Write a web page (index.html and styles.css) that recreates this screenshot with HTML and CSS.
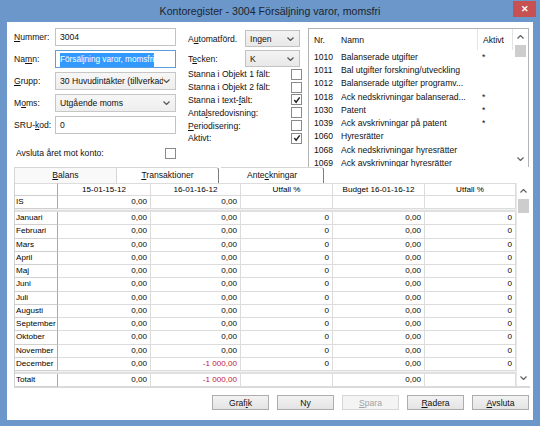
FILE: index.html
```html
<!DOCTYPE html>
<html lang="sv">
<head>
  <meta charset="UTF-8">
  <title>Kontoregister</title>
  <link rel="stylesheet" href="styles.css">
</head>
<body>
<div class="fonster">

  <!-- Titelrad -->
  <div class="titelrad">
    <span></span>
    <span class="titel">Kontoregister - 3004 Försäljning varor, momsfri</span>
    <span class="stang">✕</span>
  </div>

  <div class="innehall">
    <div class="topp">

      <!-- Vänster formulär -->
      <div class="vanster">
        <div class="falt-rad"><label><u>N</u>ummer:</label><div class="textruta">3004</div></div>
        <div class="falt-rad"><label>Na<u>m</u>n:</label><div class="textruta aktiv"><span class="markerad">Försäljning varor, momsfri</span></div></div>
        <div class="falt-rad"><label><u>G</u>rupp:</label>
          <div class="valruta"><span>30 Huvudintäkter (tillverkad</span>
            <svg class="pil" viewBox="0 0 7 4"><polyline points="0.5,0.5 3.5,3.5 6.5,0.5"/></svg></div>
        </div>
        <div class="falt-rad"><label>M<u>o</u>ms:</label>
          <div class="valruta"><span>Utgående moms</span>
            <svg class="pil" viewBox="0 0 7 4"><polyline points="0.5,0.5 3.5,3.5 6.5,0.5"/></svg></div>
        </div>
        <div class="falt-rad"><label>SRU-<u>k</u>od:</label><div class="textruta">0</div></div>
        <div class="avsluta-rad"><span>Avsluta året mot konto:</span><span class="kryss"></span></div>
      </div>

      <!-- Mitten -->
      <div class="mitten">
        <div class="val-rad"><label>A<u>u</u>tomatförd.</label>
          <div class="valruta liten"><span>Ingen</span>
            <svg class="pil" viewBox="0 0 7 4"><polyline points="0.5,0.5 3.5,3.5 6.5,0.5"/></svg></div>
        </div>
        <div class="val-rad"><label>T<u>e</u>cken:</label>
          <div class="valruta liten"><span>K</span>
            <svg class="pil" viewBox="0 0 7 4"><polyline points="0.5,0.5 3.5,3.5 6.5,0.5"/></svg></div>
        </div>
        <div class="kryss-rad"><span>Stanna i Objekt 1 fält:</span><span class="kryss"></span></div>
        <div class="kryss-rad"><span>Stanna i Objekt 2 fält:</span><span class="kryss"></span></div>
        <div class="kryss-rad"><span>Stanna i text-<u>f</u>ält:</span><span class="kryss"><svg viewBox="0 0 9 9"><polyline points="1.5,4.5 3.5,7 7.5,1.5"/></svg></span></div>
        <div class="kryss-rad"><span>Anta<u>l</u>sredovisning:</span><span class="kryss"></span></div>
        <div class="kryss-rad"><span><u>P</u>eriodisering:</span><span class="kryss"></span></div>
        <div class="kryss-rad"><span>Aktivt:</span><span class="kryss"><svg viewBox="0 0 9 9"><polyline points="1.5,4.5 3.5,7 7.5,1.5"/></svg></span></div>
      </div>

      <!-- Kontolista -->
      <div class="kontolista">
        <div class="lista-innehall">
          <div class="lista-huvud">
            <span class="k-nr">Nr.</span><span class="k-namn">Namn</span><span class="k-aktiv">Aktivt</span>
          </div>
          <div class="lista-rad"><span class="k-nr">1010</span><span class="k-namn">Balanserade utgifter</span><span class="k-aktiv">*</span></div>
          <div class="lista-rad"><span class="k-nr">1011</span><span class="k-namn">Bal utgifter forskning/utveckling</span><span class="k-aktiv"></span></div>
          <div class="lista-rad"><span class="k-nr">1012</span><span class="k-namn">Balanserade utgifter programv...</span><span class="k-aktiv"></span></div>
          <div class="lista-rad"><span class="k-nr">1018</span><span class="k-namn">Ack nedskrivningar balanserad...</span><span class="k-aktiv">*</span></div>
          <div class="lista-rad"><span class="k-nr">1030</span><span class="k-namn">Patent</span><span class="k-aktiv">*</span></div>
          <div class="lista-rad"><span class="k-nr">1039</span><span class="k-namn">Ack avskrivningar på patent</span><span class="k-aktiv">*</span></div>
          <div class="lista-rad"><span class="k-nr">1060</span><span class="k-namn">Hyresrätter</span><span class="k-aktiv"></span></div>
          <div class="lista-rad"><span class="k-nr">1068</span><span class="k-namn">Ack nedskrivningar hyresrätter</span><span class="k-aktiv"></span></div>
          <div class="lista-rad"><span class="k-nr">1069</span><span class="k-namn">Ack avskrivningar hyresrätter</span><span class="k-aktiv"></span></div>
        </div>
        <div class="rullning">
          <svg class="upp" viewBox="0 0 7 4"><polyline points="0.5,3.5 3.5,0.5 6.5,3.5"/></svg>
          <div class="tumme"></div>
          <div class="tomrum"></div>
          <svg class="ner" viewBox="0 0 7 4"><polyline points="0.5,0.5 3.5,3.5 6.5,0.5"/></svg>
        </div>
      </div>
    </div>

    <!-- Flikar -->
    <div class="flikar">
      <div class="flik vald"><u>B</u>alans</div>
      <div class="flik"><u>T</u>ransaktioner</div>
      <div class="flik">Ante<u>c</u>kningar</div>
    </div>

    <!-- Tabell -->
    <div class="tabell">
      <div class="celler">
        <div class="rh hd"></div><div class="hd">15-01-15-12</div><div class="hd">16-01-16-12</div><div class="hd">Utfall %</div><div class="hd">Budget 16-01-16-12</div><div class="hd">Utfall %</div>

        <div class="rh">IS</div><div>0,00</div><div>0,00</div><div></div><div></div><div></div>
        <div class="avdelare"></div>

        <div class="rh">Januari</div><div>0,00</div><div>0,00</div><div>0</div><div>0,00</div><div>0</div>
        <div class="rh">Februari</div><div>0,00</div><div>0,00</div><div>0</div><div>0,00</div><div>0</div>
        <div class="rh">Mars</div><div>0,00</div><div>0,00</div><div>0</div><div>0,00</div><div>0</div>
        <div class="rh">April</div><div>0,00</div><div>0,00</div><div>0</div><div>0,00</div><div>0</div>
        <div class="rh">Maj</div><div>0,00</div><div>0,00</div><div>0</div><div>0,00</div><div>0</div>
        <div class="rh">Juni</div><div>0,00</div><div>0,00</div><div>0</div><div>0,00</div><div>0</div>
        <div class="rh">Juli</div><div>0,00</div><div>0,00</div><div>0</div><div>0,00</div><div>0</div>
        <div class="rh">Augusti</div><div>0,00</div><div>0,00</div><div>0</div><div>0,00</div><div>0</div>
        <div class="rh">September</div><div>0,00</div><div>0,00</div><div>0</div><div>0,00</div><div>0</div>
        <div class="rh">Oktober</div><div>0,00</div><div>0,00</div><div>0</div><div>0,00</div><div>0</div>
        <div class="rh">November</div><div>0,00</div><div>0,00</div><div>0</div><div>0,00</div><div>0</div>
        <div class="rh">December</div><div>0,00</div><div class="neg">-1 000,00</div><div>0</div><div>0,00</div><div>0</div>
        <div class="avdelare"></div>

        <div class="rh">Totalt</div><div>0,00</div><div class="neg">-1 000,00</div><div></div><div>0,00</div><div></div>
      </div>
      <div class="rullning stor">
        <svg class="upp" viewBox="0 0 7 4"><polyline points="0.5,3.5 3.5,0.5 6.5,3.5"/></svg>
        <div class="tumme"></div>
        <div class="tomrum"></div>
        <svg class="ner" viewBox="0 0 7 4"><polyline points="0.5,0.5 3.5,3.5 6.5,0.5"/></svg>
      </div>
    </div>

    <!-- Knappar -->
    <div class="knappar">
      <button class="knapp">Graf<u>i</u>k</button>
      <button class="knapp">Ny</button>
      <button class="knapp av"><u>S</u>para</button>
      <button class="knapp"><u>R</u>adera</button>
      <button class="knapp"><u>A</u>vsluta</button>
    </div>
  </div>
</div>
</body>
</html>
```

FILE: styles.css
```css
* {
  margin: 0;
  padding: 0;
  box-sizing: border-box;
}

html, body {
  width: 540px;
  height: 426px;
  overflow: hidden;
  font-family: "Liberation Sans", Arial, sans-serif;
  font-size: 8.6px;
  color: #111;
}

u {
  text-decoration: underline;
  text-underline-offset: 1px;
}

.fonster {
  width: 540px;
  height: 426px;
  background: #6b97ca;
  display: flex;
  flex-direction: column;
}

/* Titelrad */
.titelrad {
  height: 22px;
  display: grid;
  grid-template-columns: 1fr auto 1fr;
  align-items: start;
}
.titel {
  font-size: 10.6px;
  color: #1c2430;
  line-height: 22px;
}
.stang {
  justify-self: end;
  margin-right: 4px;
  margin-top: 1px;
  width: 23px;
  height: 16px;
  background: #c75050;
  color: white;
  font-size: 9px;
  line-height: 16px;
  text-align: center;
  font-weight: bold;
}

.innehall {
  margin: 0 7px 6px 7px;
  height: 398px;
  background: #fff;
  display: flex;
  flex-direction: column;
}

.topp {
  height: 145px;
  display: flex;
  padding-left: 7px;
}

/* Vänster */
.vanster {
  width: 162px;
  padding-top: 6px;
}
.falt-rad {
  display: flex;
  align-items: center;
  height: 18px;
  margin-bottom: 4px;
}
.falt-rad label {
  width: 41px;
}
.textruta {
  width: 121px;
  height: 18px;
  border: 1px solid #c3c3c3;
  padding-left: 4px;
  line-height: 16px;
  white-space: nowrap;
  overflow: hidden;
}
.textruta.aktiv {
  border-color: #5b9ee0;
  padding-top: 1px;
  line-height: 14px;
}
.markerad {
  background: #3399ff;
  color: white;
  display: inline-block;
  height: 14px;
  font-size: 8.2px;
}
.valruta {
  width: 121px;
  height: 18px;
  border: 1px solid #c6c6c6;
  background: linear-gradient(#f6f6f6, #eeeeee);
  padding-left: 4px;
  padding-right: 5px;
  display: flex;
  align-items: center;
  justify-content: space-between;
  white-space: nowrap;
}
.valruta span {
  overflow: hidden;
}
.pil {
  width: 7px;
  height: 4px;
  flex-shrink: 0;
  fill: none;
  stroke: #555;
  stroke-width: 1.2;
}
.avsluta-rad {
  display: flex;
  align-items: center;
  height: 12px;
  margin-top: 13px;
  padding-left: 2px;
}
.avsluta-rad span:first-child {
  width: 149px;
}

.kryss {
  width: 11px;
  height: 11px;
  border: 1px solid #8a8a8a;
  background: #fff;
  display: flex;
  align-items: center;
  justify-content: center;
}
.kryss svg {
  width: 8px;
  height: 8px;
  fill: none;
  stroke: #222;
  stroke-width: 1.6;
}

/* Mitten */
.mitten {
  width: 114px;
  margin-left: 12px;
  padding-top: 8px;
}
.val-rad {
  display: flex;
  align-items: center;
  height: 17px;
  margin-bottom: 3px;
}
.val-rad label {
  width: 57px;
}
.valruta.liten {
  width: 55px;
  height: 17px;
  background: linear-gradient(#f3f3f3, #e8e8e8);
  border-color: #c2c2c2;
}
.kryss-rad {
  display: flex;
  align-items: center;
  justify-content: space-between;
  height: 12.8px;
}
.kryss-rad:nth-child(3) {
  margin-top: -2px;
}

/* Kontolista */
.kontolista {
  width: 221px;
  height: 139px;
  margin-left: 6px;
  margin-top: 6px;
  border: 1px solid #b4b4b4;
  border-bottom: none;
  display: flex;
  overflow: hidden;
}
.lista-innehall {
  flex: 1;
}
.lista-huvud, .lista-rad {
  display: flex;
  white-space: nowrap;
}
.lista-huvud {
  height: 21px;
  align-items: center;
}
.lista-rad {
  height: 13.3px;
  align-items: center;
}
.k-nr {
  width: 32px;
  padding-left: 5px;
}
.k-namn {
  width: 136px;
  overflow: hidden;
}
.k-aktiv {
  width: 36px;
  padding-left: 5px;
  align-self: stretch;
  display: flex;
  align-items: center;
}
.lista-huvud .k-aktiv {
  border-left: 1px solid #e3e3e3;
  border-right: 1px solid #e3e3e3;
}

.rullning {
  width: 15px;
  display: flex;
  flex-direction: column;
  align-items: center;
  background: #fff;
}
.rullning svg {
  width: 7px;
  height: 4px;
  fill: none;
  stroke: #606060;
  stroke-width: 1.2;
  flex-shrink: 0;
}
.rullning .upp {
  margin-top: 6px;
}
.rullning .tumme {
  width: 11px;
  height: 12px;
  margin-top: 6px;
  background: #cdcdcd;
}
.rullning .tomrum {
  flex: 1;
}
.rullning .ner {
  margin-bottom: 6px;
}

/* Flikar */
.flikar {
  height: 16px;
  display: flex;
  padding-left: 7px;
}
.flik {
  width: 103px;
  height: 16px;
  border: 1px solid #d6d6d6;
  border-bottom: none;
  text-align: center;
  line-height: 15px;
  background: #fff;
}
.flik + .flik {
  border-left: none;
  border-right: 1px solid #7d7d7d;
  border-top-right-radius: 3px;
  width: 102px;
}
.flik.vald {
  background: #f9f9f9;
}
.flik:last-child {
  margin-left: 2px;
  width: 103px;
}

/* Tabell */
.tabell {
  margin-left: 7px;
  width: 516px;
  height: 205px;
  display: flex;
  border-left: 1px solid #d0d0d0;
  border-bottom: 2px solid #d9d9d9;
}
.celler {
  width: 501px;
  display: grid;
  grid-template-columns: 43px 93px 90px 92px 92px 91px;
  grid-template-rows: 13px 13px 3px repeat(12, 13.25px) 3px 13px;
  align-content: start;
  font-size: 8.1px;
  color: #000;
}
.celler > div {
  border-right: 1px solid #dcdcdc;
  border-bottom: 1px solid #dcdcdc;
  text-align: right;
  padding-right: 3px;
  line-height: 12px;
  white-space: nowrap;
  overflow: hidden;
}
.celler > .hd {
  text-align: center;
  padding-right: 0;
  border-top: 1px solid #dcdcdc;
  line-height: 11px;
}
.celler > .rh {
  text-align: left;
  padding-left: 1px;
  padding-right: 0;
  border-right: 1px solid #a9a9a9;
  border-bottom: 1px solid #cfcfcf;
}
.celler > .avdelare {
  grid-column: 1 / -1;
  border: none;
  background: #e0e0e0;
  border-top: 1px solid #f2f2f2;
}
.celler > .neg {
  color: #c0143c;
}
.rullning.stor {
  width: 15px;
  border-left: 1px solid #e8e8e8;
}
.rullning.stor .tumme {
  height: 14px;
}

/* Knappar */
.knappar {
  display: flex;
  justify-content: flex-end;
  gap: 8px;
  padding-right: 4px;
  margin-top: 7px;
}
.knapp {
  width: 57px;
  height: 15px;
  border: 1px solid #adadad;
  background: linear-gradient(#f2f2f2, #e4e4e4);
  font-family: "Liberation Sans", Arial, sans-serif;
  font-size: 8.6px;
  color: #111;
}
.knapp.av {
  border-color: #d6d6d6;
  background: #f4f4f4;
  color: #a3a3a3;
}
```
